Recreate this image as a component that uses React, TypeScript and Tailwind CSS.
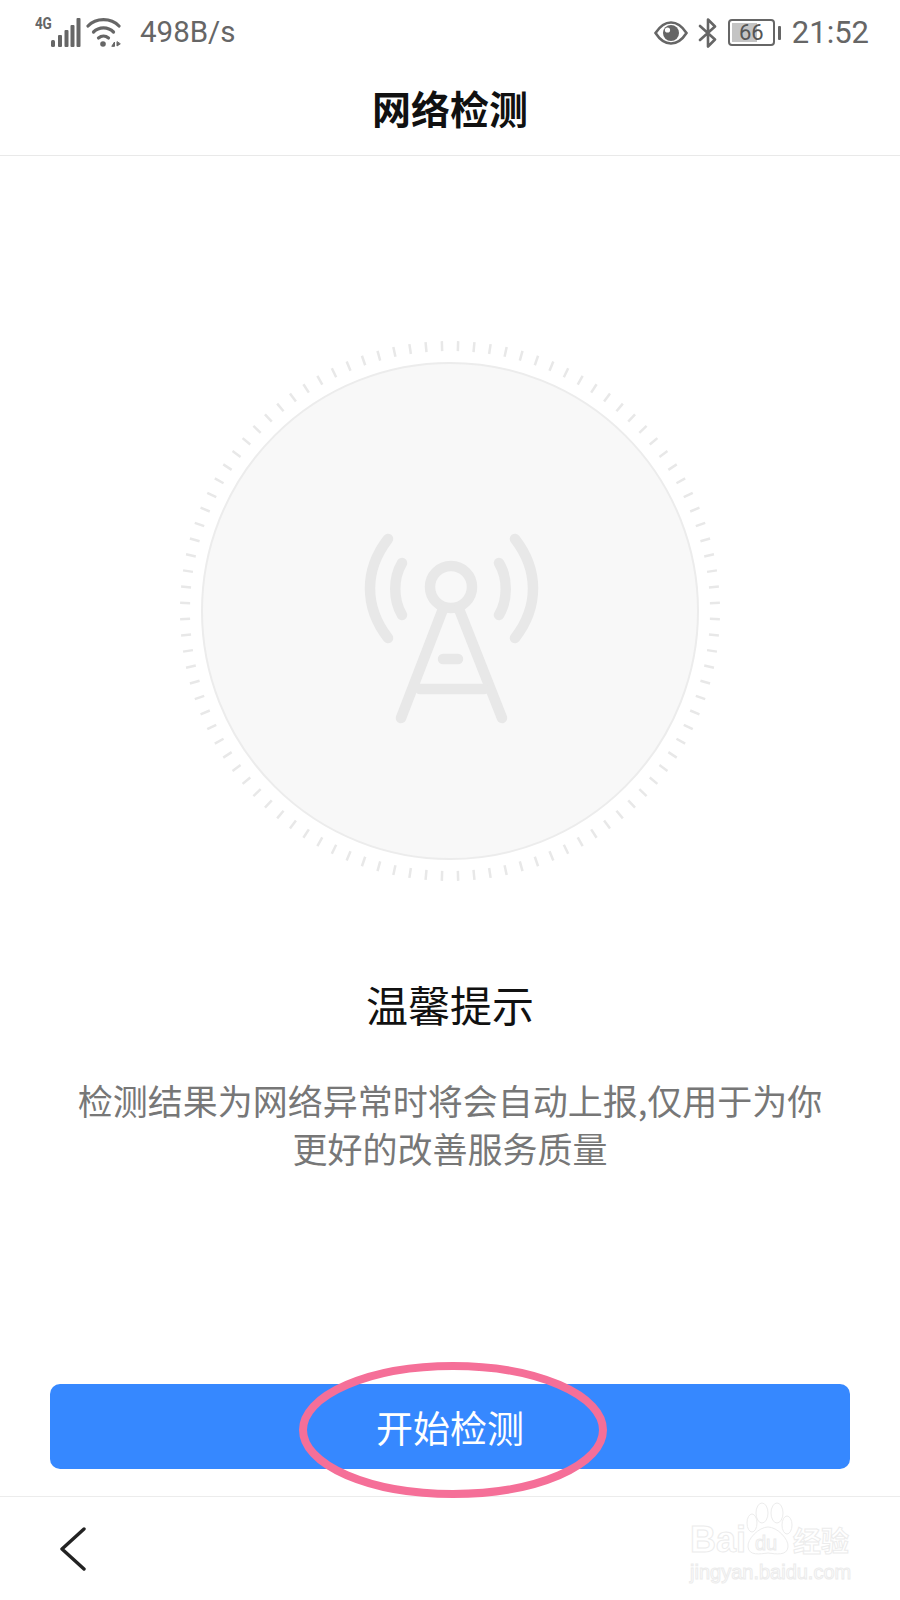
import { Fragment } from "react";

const Signal = () => (
  <div className="relative w-[46px] h-[30px]">
    <span className="absolute left-0 top-[-4px] text-[17px] leading-[18px] font-bold tracking-[-0.5px] text-[#666] font-['Roboto',sans-serif] origin-left scale-x-[0.8]">4G</span>
    <svg width="46" height="30" viewBox="0 0 46 30" fill="#666">
      <rect x="16" y="22" width="4" height="7" rx="1.5" />
      <rect x="23" y="17" width="4" height="12" rx="1" />
      <rect x="29.5" y="12" width="4" height="17" rx="1" />
      <rect x="35.5" y="7" width="4" height="22" rx="1" />
      <rect x="41.5" y="0" width="4" height="29" rx="1" />
    </svg>
  </div>
);

const Wifi = () => (
  <svg width="36" height="30" viewBox="0 0 36 30" fill="none" stroke="#666" strokeWidth="3.2" strokeLinecap="round">
    <path d="M2 8 C10 -0.5 25 -0.5 33 8" />
    <path d="M7.5 14 C13 8.5 22 8.5 27.5 14" />
    <path d="M12.5 20 C15.5 17.5 19.5 17.5 22.5 20" />
    <circle cx="17" cy="26" r="2.8" fill="#666" stroke="none" />
    <path d="M26 28 L28.5 24 L28.5 28 Z M31 24 L31 28 L34 26 Z" fill="#666" strokeWidth="1" />
  </svg>
);

const Eye = () => (
  <svg width="34" height="24" viewBox="0 0 34 24">
    <path d="M1.5 12 C7 3.5 12 1.5 17 1.5 C22 1.5 27 3.5 32.5 12 C27 20.5 22 22.5 17 22.5 C12 22.5 7 20.5 1.5 12 Z" fill="none" stroke="#666" strokeWidth="2.6" />
    <circle cx="17" cy="12" r="8" fill="#666" />
    <circle cx="13.5" cy="9" r="2.6" fill="#fff" />
  </svg>
);

const Bluetooth = () => (
  <svg width="20" height="30" viewBox="0 0 20 30" fill="none" stroke="#666" strokeWidth="2.6" strokeLinejoin="round" strokeLinecap="round">
    <path d="M2 8 L17 21.5 L10 28.5 L10 1.5 L17 8.5 L2 22" />
  </svg>
);

const Battery = () => (
  <div className="flex items-center gap-[3px]">
    <div className="relative w-[47px] h-[27px] rounded-[4px] border-[2.5px] border-[#666] p-[2px]">
      <div className="w-[25px] h-full bg-[#c4c4c4]" />
      <span className="absolute inset-0 flex items-center justify-center text-[22px] leading-none text-[#555] font-['Roboto',sans-serif]">66</span>
    </div>
    <div className="w-[3px] h-[14px] rounded-[1px] bg-[#666]" />
  </div>
);

const StatusBar = () => (
  <div className="h-[65px] flex items-center justify-between pl-[35px] pr-[31px] text-[#666] font-['Roboto',sans-serif]">
    <div className="flex items-center gap-[5px]">
      <Signal />
      <Wifi />
      <span className="ml-[13px] text-[29.5px] leading-none">498B/s</span>
    </div>
    <div className="flex items-center gap-[10px]">
      <Eye />
      <Bluetooth />
      <Battery />
      <span className="ml-[1px] text-[31px] leading-none">21:52</span>
    </div>
  </div>
);

const TICKS = Array.from({ length: 104 }, (_, i) => ((i + 0.5) * 360) / 104);

const Dial = () => (
  <div className="relative w-[542px] h-[542px] mx-auto mt-[184px] flex items-center justify-center">
    <svg className="absolute inset-0" width="542" height="542" viewBox="0 0 542 542">
      {TICKS.map((deg) => (
        <line key={deg} x1="271" y1="1" x2="271" y2="11" stroke="#e8e8e8" strokeWidth="2.5" transform={`rotate(${deg} 271 271)`} />
      ))}
    </svg>
    <div className="w-[498px] h-[498px] rounded-full bg-[#f8f8f8] border-2 border-[#ececec] flex items-center justify-center pt-[38px]">
      <svg width="180" height="200" viewBox="0 0 180 200" fill="none" stroke="#e8e8e8" strokeWidth="10.5" strokeLinecap="round">
        <circle cx="91" cy="57" r="21" />
        <path d="M83 79 L41 188" />
        <path d="M99 79 L142 188" />
        <path d="M60 159 L124 159" />
        <path d="M83 129 L98 129" />
        <path d="M42 33 C33 48 33 70 42 85" />
        <path d="M28 9 C4 40 4 77 28 108" />
        <path d="M139 33 C148 48 148 70 139 85" />
        <path d="M155 9 C179 40 179 77 155 108" />
      </svg>
    </div>
  </div>
);

const Watermark = () => (
  <div className="absolute left-[690px] top-[1500px] w-[165px] h-[85px] text-white [-webkit-text-stroke:1px_#ececec]">
    <span className="absolute left-0 top-[20px] text-[36px] leading-[40px] font-bold font-['Liberation_Sans',sans-serif]">Bai</span>
    <svg className="absolute left-[56px] top-[2px]" width="50" height="54" viewBox="0 0 50 54" fill="#fff" stroke="#ececec" strokeWidth="1">
      <ellipse cx="6" cy="21" rx="5" ry="9" />
      <ellipse cx="16" cy="11" rx="6" ry="10" />
      <ellipse cx="31" cy="11" rx="6" ry="10" />
      <ellipse cx="41" cy="23" rx="5" ry="9" />
      <path d="M22 25 C31 25 43 37 42 45 C41 54 30 52 22 51 C14 52 3 54 2 45 C1 37 13 25 22 25 Z" />
    </svg>
    <span className="absolute left-[65px] top-[33px] text-[20px] leading-[20px] font-['Liberation_Sans',sans-serif]">du</span>
    <span className="absolute left-[103px] top-[24px] text-[28px] leading-[32px] font-bold font-['Noto_Sans_CJK_SC',sans-serif]">经验</span>
    <span className="absolute left-0 top-[60px] text-[20px] leading-[24px] font-['Liberation_Sans',sans-serif]">jingyan.baidu.com</span>
  </div>
);

const App = () => {
  const lines = ["检测结果为网络异常时将会自动上报,仅用于为你", "更好的改善服务质量"];
  return (
    <div className="relative w-[900px] h-[1600px] bg-white flex flex-col overflow-hidden font-['Noto_Sans_CJK_SC',sans-serif]">
      <StatusBar />
      <div className="h-[91px] flex items-center justify-center border-b border-[#e9e9e9] pb-[5px]">
        <h1 className="text-[39px] leading-none font-bold text-[#111]">网络检测</h1>
      </div>
      <Dial />
      <h2 className="mt-[92px] text-center text-[42px] leading-[60px] font-normal text-[#111]">温馨提示</h2>
      <p className="mt-[42px] text-center text-[35px] leading-[48px] text-[#777]">
        {lines.map((l) => (
          <Fragment key={l}>
            {l}
            <br />
          </Fragment>
        ))}
      </p>
      <div className="mt-auto px-[50px]">
        <div className="relative">
          <button className="w-full h-[85px] rounded-[10px] bg-[#3688ff] text-white text-[37px] leading-none pt-[2px]">开始检测</button>
          <svg className="absolute left-[249px] top-[-22px]" width="308" height="136" viewBox="0 0 308 136" fill="none">
            <ellipse cx="154" cy="68" rx="150" ry="64" stroke="#f56f98" strokeWidth="8" />
          </svg>
        </div>
      </div>
      <div className="mt-[27px] h-[104px] border-t border-[#ececec] pl-[60px] flex items-center">
        <svg width="26" height="44" viewBox="0 0 26 44" fill="none" stroke="#222" strokeWidth="3.4" strokeLinecap="round" strokeLinejoin="round">
          <path d="M24 2 L2 22 L24 42" />
        </svg>
      </div>
      <Watermark />
    </div>
  );
};

export default App;
